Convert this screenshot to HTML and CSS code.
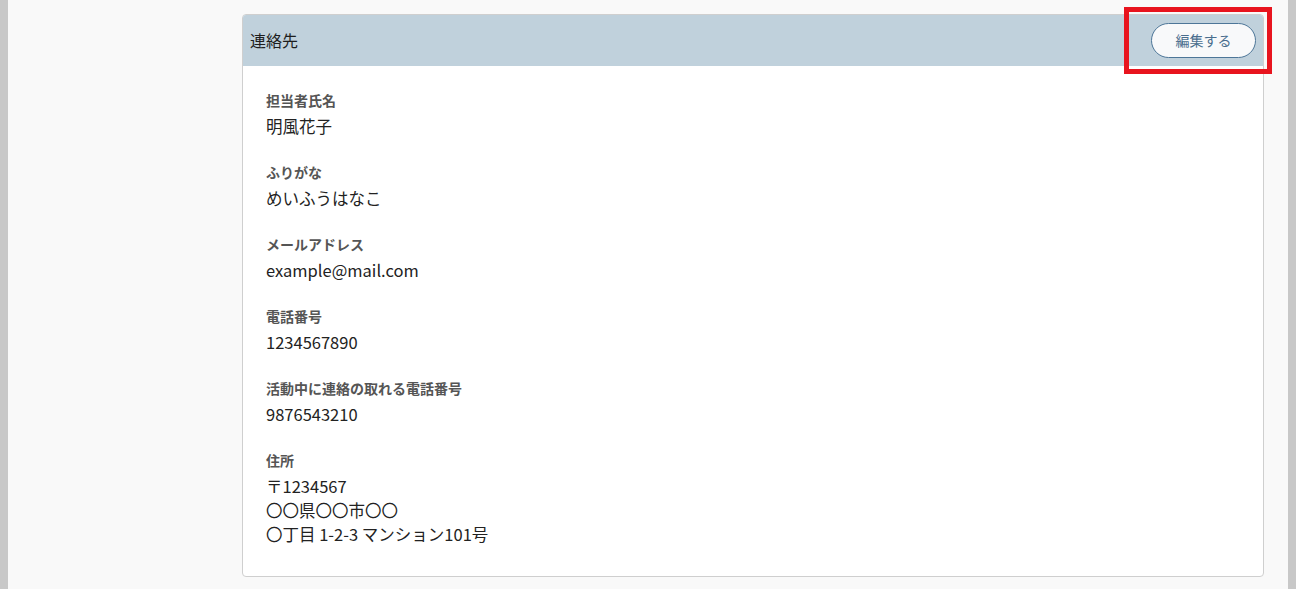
FILE: index.html
```html
<!DOCTYPE html>
<html lang="ja">
<head>
<meta charset="utf-8">
<link rel="stylesheet" href="styles.css">
</head>
<body>
<div class="frame">
  <main class="main">
    <section class="card">
      <header class="card-header">
        <h2 class="card-title">連絡先</h2>
        <button class="edit-btn" type="button">編集する</button>
        <span class="highlight"></span>
      </header>
      <dl class="card-body">
        <div class="item"><dt>担当者氏名</dt><dd>明風花子</dd></div>
        <div class="item"><dt>ふりがな</dt><dd>めいふうはなこ</dd></div>
        <div class="item"><dt>メールアドレス</dt><dd>example@mail.com</dd></div>
        <div class="item"><dt>電話番号</dt><dd>1234567890</dd></div>
        <div class="item"><dt>活動中に連絡の取れる電話番号</dt><dd>9876543210</dd></div>
        <div class="item"><dt>住所</dt><dd>〒1234567<br>〇〇県〇〇市〇〇<br>〇丁目 1-2-3 マンション101号</dd></div>
      </dl>
    </section>
  </main>
</div>
</body>
</html>
```
FILE: styles.css
```css
* { box-sizing: border-box; }
html, body { margin: 0; padding: 0; height: 100%; }
body {
  background: #c8c8c8;
  font-family: "Noto Sans CJK JP", "Noto Sans", sans-serif;
  color: #222;
  overflow: hidden;
}
.frame {
  margin: 0 8px;
  height: 100%;
  background: #f9f9f9;
  padding: 14px 24px 0 234px;
}
.card {
  background: #fff;
  border: 1px solid #cfcfcf;
  border-radius: 4px;
}
.card-header {
  position: relative;
  display: flex;
  align-items: center;
  justify-content: space-between;
  height: 51px;
  padding: 0 7px 0 7px;
  background: #c0d1dc;
  border-radius: 3px 3px 0 0;
}
.card-title {
  margin: 0;
  font-size: 16px;
  font-weight: 400;
  color: #1e1e1e;
  line-height: 24px;
  margin-bottom: 2px;
}
.edit-btn {
  width: 105px;
  height: 35px;
  border: 1px solid #4d7698;
  border-radius: 18px;
  background: #f8f9fa;
  color: #4a6e8e;
  font-family: "Noto Sans CJK JP", sans-serif;
  font-size: 14px;
  padding: 0;
  margin-bottom: 1px;
}
.highlight {
  position: absolute;
  top: -8px;
  right: -9px;
  width: 148px;
  height: 67px;
  border: 5px solid #e8141e;
  pointer-events: none;
}
.card-body {
  margin: 0;
  padding: 23px 23px 30px;
  display: flex;
  flex-direction: column;
  gap: 23px;
}
.item dt {
  font-size: 14px;
  font-weight: 700;
  color: #555;
  line-height: 22px;
  margin-bottom: 3px;
}
.item dd {
  margin: 0;
  font-size: 16.5px;
  line-height: 24px;
  color: #222;
}
```
